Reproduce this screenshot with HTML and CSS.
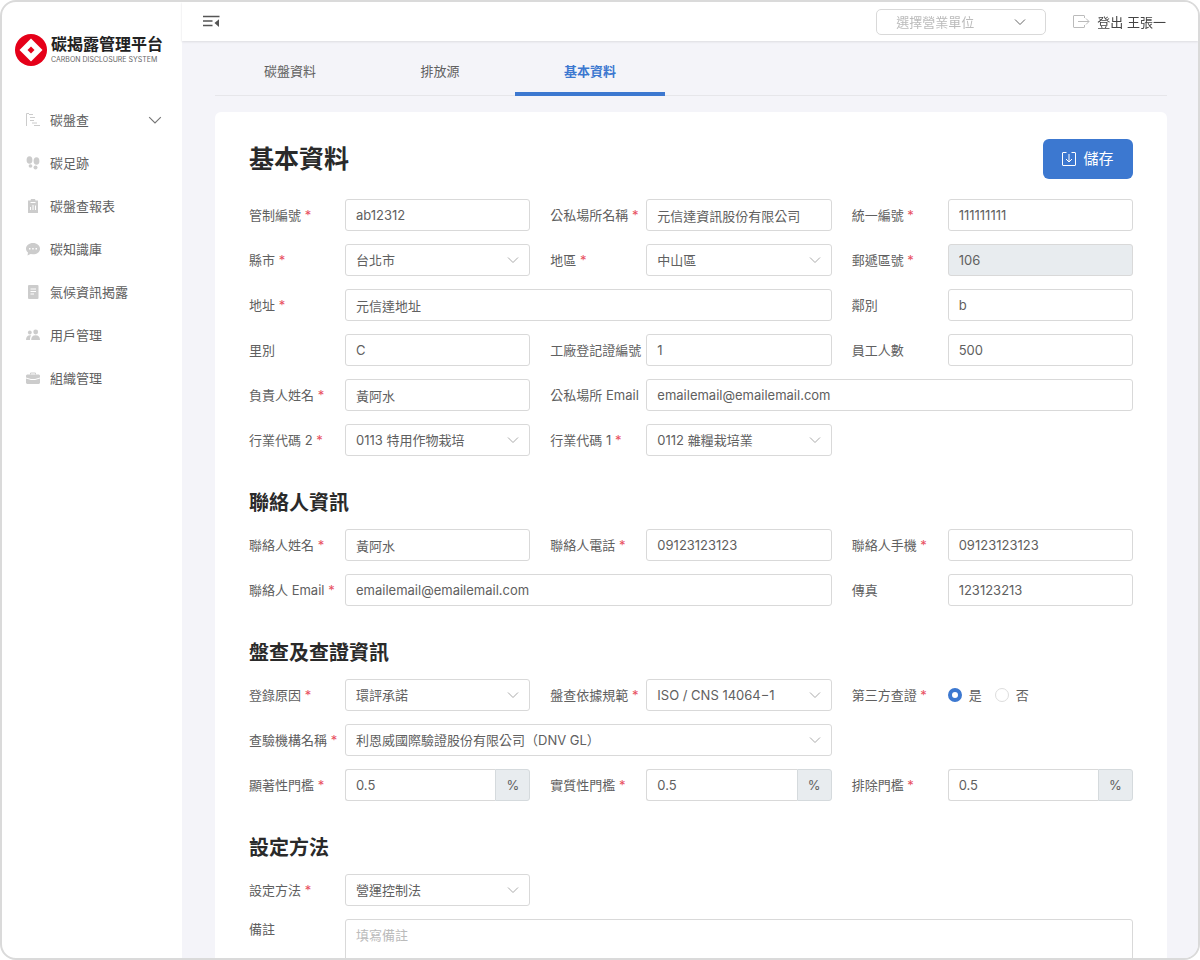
FILE: index.html
```html
<!DOCTYPE html>
<html lang="zh-Hant">
<head>
<meta charset="utf-8">
<meta name="viewport" content="width=device-width, initial-scale=1">
<title>碳揭露管理平台</title>
<link rel="stylesheet" href="styles.css">
</head>
<body>
<svg class="sprite" aria-hidden="true">
  <symbol id="chevron" viewBox="0 0 12 12"><path d="M1 3.5l5 5 5-5" fill="none" stroke="currentColor"/></symbol>
</svg>
<div class="app">
  <aside class="sidebar">
    <a class="brand" href="#">
      <svg class="brand-mark" viewBox="0 0 32 32" aria-hidden="true"><circle cx="16" cy="16" r="16" fill="#e50019"/><path d="M16 4.500L27.500 16 16 27.500 4.500 16z" fill="#fff"/><path d="M16 12.500l3.500 3.500-3.500 3.500-3.500-3.500z" fill="#e50019"/></svg>
      <span class="brand-text"><span class="brand-name">碳揭露管理平台</span><span class="brand-sub">CARBON DISCLOSURE SYSTEM</span></span>
    </a>
    <nav class="menu">
      <a class="menu-item" href="#">
        <svg class="menu-icon" viewBox="0 0 14 14" fill="none" stroke="currentColor"><path d="M3 .5H.5v12.500M3 1.500h4M4 4.500h5M4 7.500h4M6 10h5M8 12.500h6"/></svg>
        <span class="menu-label">碳盤查</span>
        <svg class="menu-arrow"><use href="#chevron"/></svg>
      </a>
      <a class="menu-item" href="#">
        <svg class="menu-icon" viewBox="0 0 14 14" fill="currentColor"><ellipse cx="3.500" cy="4" rx="2.900" ry="3.800"/><ellipse cx="4.500" cy="10" rx="1.900" ry="1.800"/><ellipse cx="10.500" cy="5" rx="2.900" ry="3.800"/><ellipse cx="9.500" cy="11.500" rx="2" ry="2"/></svg>
        <span class="menu-label">碳足跡</span>
      </a>
      <a class="menu-item" href="#">
        <svg class="menu-icon" viewBox="0 0 14 14"><path d="M2 1.500h2.500L5 0h4l.5 1.500H12V14H2z" fill="currentColor"/><path d="M4.500 3.500h5M4.500 11V8M7 11V6M9.500 11V6.500" stroke="#fff" fill="none"/></svg>
        <span class="menu-label">碳盤查報表</span>
      </a>
      <a class="menu-item" href="#">
        <svg class="menu-icon" viewBox="0 0 14 14"><path d="M7 1c4 0 7 2.500 7 5.700s-3 5.600-7 5.600L4.500 12 1.500 13.500l.5-3C.7 9.500 0 8.200 0 6.700 0 3.500 3 1 7 1z" fill="currentColor"/><path d="M3 6h1.500v1.500H3zM6.200 6h1.500v1.500H6.200zM9.500 6H11v1.500H9.500z" fill="#fff"/></svg>
        <span class="menu-label">碳知識庫</span>
      </a>
      <a class="menu-item" href="#">
        <svg class="menu-icon" viewBox="0 0 14 14"><rect x="2" width="10.500" height="14" rx="1" fill="currentColor"/><path d="M4.500 4h5.500M4.500 6.500h5.500M4.500 9h3.500" stroke="#fff" fill="none"/></svg>
        <span class="menu-label">氣候資訊揭露</span>
      </a>
      <a class="menu-item" href="#">
        <svg class="menu-icon" viewBox="0 0 14 14" fill="currentColor"><circle cx="3.800" cy="4.500" r="1.900"/><circle cx="9.700" cy="4" r="2.400"/><path d="M0 12c0-3 1.500-4.700 4-4.700l1.200.3C4.300 8.700 4 10 4 12zM5.200 12c0-3 1.500-4.700 4.400-4.700S14 9 14 12z"/></svg>
        <span class="menu-label">用戶管理</span>
      </a>
      <a class="menu-item" href="#">
        <svg class="menu-icon" viewBox="0 0 14 14"><path d="M4.500 3.500V2h5v1.500" fill="none" stroke="currentColor"/><path d="M1 3.500h12l1 1v2L9 8H5L0 6.500v-2zM0 7.500L5 9h4l5-1.500V12l-1 1H1l-1-1z" fill="currentColor"/></svg>
        <span class="menu-label">組織管理</span>
      </a>
    </nav>
  </aside>
  <div class="page">
    <header class="topbar">
      <button class="collapse" type="button" aria-label="收合選單">
        <svg viewBox="0 0 17 13" aria-hidden="true"><path d="M0 1.500h16.500M0 6h9.500M0 10.500h9.500" stroke="currentColor" stroke-width="1.300" fill="none"/><path d="M11.500 8L16 4.200V12z" fill="currentColor"/></svg>
      </button>
      <div class="topbar-right">
        <span class="select unit">
          <select aria-label="選擇營業單位"><option>選擇營業單位</option></select>
          <svg><use href="#chevron"/></svg>
        </span>
        <a class="logout" href="#">
          <svg viewBox="0 0 17 13" aria-hidden="true" fill="none" stroke="#bbb"><path d="M11.500 3V1a.5.500 0 0 0-.5-.5H1a.5.500 0 0 0-.5.500v11a.5.500 0 0 0 .5.500h10a.5.500 0 0 0 .5-.5v-2M5 6.500h11M13 3.500l3 3-3 3"/></svg>
          <span>登出 王張一</span>
        </a>
      </div>
    </header>
    <main class="main">
      <nav class="tabs">
        <a class="tab" href="#">碳盤資料</a>
        <a class="tab" href="#">排放源</a>
        <a class="tab tab-active" href="#" aria-current="page">基本資料</a>
      </nav>
      <form class="card">
        <div class="card-head">
          <h1>基本資料</h1>
          <button class="save" type="button">
            <svg viewBox="0 0 14 14" aria-hidden="true" fill="none" stroke="currentColor"><path d="M4.500 .5H1a.5.500 0 0 0-.5.500v12a.5.500 0 0 0 .5.500h12a.5.500 0 0 0 .5-.5V1a.5.500 0 0 0-.5-.5H9.500M7 2v8M4 7l3 3 3-3"/></svg>
            儲存
          </button>
        </div>
        <div class="grid">
          <div class="field"><label for="f1">管制編號 <i>*</i></label><input id="f1" type="text" value="ab12312"></div>
          <div class="field"><label for="f2">公私場所名稱 <i>*</i></label><input id="f2" type="text" value="元信達資訊股份有限公司"></div>
          <div class="field"><label for="f3">統一編號 <i>*</i></label><input id="f3" type="text" value="111111111"></div>
          <div class="field"><label for="f4">縣市 <i>*</i></label><span class="select"><select id="f4"><option>台北市</option></select><svg><use href="#chevron"/></svg></span></div>
          <div class="field"><label for="f5">地區 <i>*</i></label><span class="select"><select id="f5"><option>中山區</option></select><svg><use href="#chevron"/></svg></span></div>
          <div class="field"><label for="f6">郵遞區號 <i>*</i></label><input id="f6" type="text" value="106" disabled></div>
          <div class="field span-2"><label for="f7">地址 <i>*</i></label><input id="f7" type="text" value="元信達地址"></div>
          <div class="field"><label for="f8">鄰別</label><input id="f8" type="text" value="b"></div>
          <div class="field"><label for="f9">里別</label><input id="f9" type="text" value="C"></div>
          <div class="field"><label for="f10">工廠登記證編號</label><input id="f10" type="text" value="1"></div>
          <div class="field"><label for="f11">員工人數</label><input id="f11" type="text" value="500"></div>
          <div class="field"><label for="f12">負責人姓名 <i>*</i></label><input id="f12" type="text" value="黃阿水"></div>
          <div class="field span-2"><label for="f13">公私場所 Email</label><input id="f13" type="email" value="emailemail@emailemail.com"></div>
          <div class="field"><label for="f14">行業代碼 2 <i>*</i></label><span class="select"><select id="f14"><option>0113 特用作物栽培</option></select><svg><use href="#chevron"/></svg></span></div>
          <div class="field"><label for="f15">行業代碼 1 <i>*</i></label><span class="select"><select id="f15"><option>0112 雜糧栽培業</option></select><svg><use href="#chevron"/></svg></span></div>
        </div>
        <h2>聯絡人資訊</h2>
        <div class="grid">
          <div class="field"><label for="f16">聯絡人姓名 <i>*</i></label><input id="f16" type="text" value="黃阿水"></div>
          <div class="field"><label for="f17">聯絡人電話 <i>*</i></label><input id="f17" type="tel" value="09123123123"></div>
          <div class="field"><label for="f18">聯絡人手機 <i>*</i></label><input id="f18" type="tel" value="09123123123"></div>
          <div class="field span-2"><label for="f19">聯絡人 Email <i>*</i></label><input id="f19" type="email" value="emailemail@emailemail.com"></div>
          <div class="field"><label for="f20">傳真</label><input id="f20" type="tel" value="123123213"></div>
        </div>
        <h2>盤查及查證資訊</h2>
        <div class="grid">
          <div class="field"><label for="f21">登錄原因 <i>*</i></label><span class="select"><select id="f21"><option>環評承諾</option></select><svg><use href="#chevron"/></svg></span></div>
          <div class="field"><label for="f22">盤查依據規範 <i>*</i></label><span class="select"><select id="f22"><option>ISO / CNS 14064−1</option></select><svg><use href="#chevron"/></svg></span></div>
          <div class="field" role="radiogroup" aria-labelledby="third"><span class="label" id="third">第三方查證 <i>*</i></span>
            <span class="radios"><label><input type="radio" name="third" checked>是</label><label><input type="radio" name="third">否</label></span></div>
          <div class="field span-2"><label for="f24">查驗機構名稱 <i>*</i></label><span class="select"><select id="f24"><option>利恩威國際驗證股份有限公司（DNV GL）</option></select><svg><use href="#chevron"/></svg></span></div>
          <div class="field start"><label for="f25">顯著性門檻 <i>*</i></label><span class="percent"><input id="f25" type="text" value="0.5"><span>%</span></span></div>
          <div class="field"><label for="f26">實質性門檻 <i>*</i></label><span class="percent"><input id="f26" type="text" value="0.5"><span>%</span></span></div>
          <div class="field"><label for="f27">排除門檻 <i>*</i></label><span class="percent"><input id="f27" type="text" value="0.5"><span>%</span></span></div>
        </div>
        <h2>設定方法</h2>
        <div class="grid">
          <div class="field"><label for="f28">設定方法 <i>*</i></label><span class="select"><select id="f28"><option>營運控制法</option></select><svg><use href="#chevron"/></svg></span></div>
          <div class="field note"><label for="f29">備註</label><textarea id="f29" rows="4" placeholder="填寫備註"></textarea></div>
        </div>
      </form>
    </main>
  </div>
</div>
</body>
</html>
```
FILE: styles.css
```css
* { box-sizing: border-box; }
body {
  margin: 0;
  color: #606060;
  font: 13px/20px Inter, "Noto Sans CJK TC", sans-serif;
}
a { color: inherit; text-decoration: none; }
button, input, select, textarea { font: inherit; color: inherit; margin: 0; }
.sprite { display: none; }

.app {
  display: flex;
  height: 100vh;
  overflow: hidden;
  background: #fff;
  border: 2px solid #dadada;
  border-radius: 16px;
}

.sidebar { flex: 0 0 180px; padding-top: 32px; }
.brand { display: flex; align-items: center; gap: 4px; padding-left: 13px; }
.brand-mark { width: 32px; height: 32px; flex: none; }
.brand-text { display: flex; flex-direction: column; white-space: nowrap; }
.brand-name { color: #222; font-size: 16px; line-height: 20px; font-weight: 700; }
.brand-sub { color: #666; font-size: 7px; line-height: 12px; }
.menu { display: flex; flex-direction: column; margin-top: 32px; }
.menu-item { display: flex; align-items: center; gap: 10px; height: 43px; padding: 0 20px 0 24px; }
.menu-icon { width: 14px; height: 14px; color: #ccc; flex: none; }
.menu-label { flex: 1; }
.menu-arrow { width: 14px; height: 14px; color: #777; }

.page { flex: 1; min-width: 0; display: flex; flex-direction: column; }
.topbar {
  display: flex;
  align-items: center;
  justify-content: space-between;
  flex: 0 0 39px;
  padding: 0 32px 0 21px;
  background: #fff;
  box-shadow: 0 1px 2px #dcdce0;
  z-index: 1;
}
.collapse { display: flex; padding: 0; border: 0; background: none; color: #555; cursor: pointer; }
.collapse svg { width: 17px; height: 13px; }
.topbar-right { display: flex; align-items: center; gap: 27px; }
.logout { display: flex; align-items: center; gap: 7px; color: #444; }
.logout svg { width: 17px; height: 13px; }

.main {
  flex: 1;
  min-height: 0;
  overflow: auto;
  scrollbar-width: none;
  padding: 5px 31px 32px 33px;
  background: #f4f4f9;
}
.tabs { display: flex; height: 50px; margin-bottom: 16px; border-bottom: 1px solid #e6e6ea; }
.tab { width: 150px; height: 50px; line-height: 50px; text-align: center; }
.tab-active { color: #3c78d0; font-weight: 700; border-bottom: 4px solid #3c78d0; }

.card { padding: 27px 34px 32px; background: #fff; border-radius: 6px; }
.card-head { display: flex; justify-content: space-between; align-items: center; margin-bottom: 20px; }
h1, h2 { margin: 0; color: #2a2a2a; font-weight: 700; }
h1 { font-size: 25px; line-height: 40px; }
h2 { margin: 32px 0 11px; font-size: 20px; line-height: 30px; }
.save {
  display: flex;
  align-items: center;
  justify-content: center;
  gap: 7px;
  width: 90px;
  height: 40px;
  padding: 0;
  border: 0;
  border-radius: 6px;
  background: #3c78d0;
  color: #fff;
  font-size: 15px;
  cursor: pointer;
}
.save svg { width: 14px; height: 14px; }

.grid { display: grid; grid-template-columns: repeat(3, minmax(0, 1fr)); gap: 13px 20px; }
.field { display: grid; grid-template-columns: 96px minmax(0, 1fr); align-items: center; }
.field > label, .label { white-space: nowrap; }
.field i { color: #e8505f; font-style: normal; }
.span-2 { grid-column: span 2; }
.start { grid-column-start: 1; }
.note { grid-column: 1 / -1; align-items: start; }

input[type="text"], input[type="email"], input[type="tel"], select, textarea {
  width: 100%;
  height: 32px;
  padding: 0 10px;
  border: 1px solid #d9d9d9;
  border-radius: 3px;
  background: #fff;
}
input[type="text"]:disabled { background: #e8ecef; }
textarea { display: block; height: 96px; padding: 5px 10px; resize: none; }
textarea::placeholder { color: #bbb; }

.select { position: relative; display: block; }
.select select { display: block; appearance: none; padding-right: 30px; }
.select svg { position: absolute; right: 11px; top: 10px; width: 12px; height: 12px; color: #aaa; pointer-events: none; }
.unit { width: 170px; }
.unit select { height: 26px; padding-left: 19px; border-radius: 5px; color: #bbb; }
.unit svg { right: 20px; top: 7px; color: #666; }

.percent { display: flex; }
.percent input[type="text"] { flex: 1; min-width: 0; border-radius: 3px 0 0 3px; border-right: 0; }
.percent span {
  flex: 0 0 35px;
  line-height: 30px;
  text-align: center;
  background: #e8ecef;
  border: 1px solid #d5dadd;
  border-radius: 0 3px 3px 0;
}

.radios { display: flex; gap: 13px; }
.radios label { display: flex; align-items: center; gap: 7px; }
.radios input {
  appearance: none;
  width: 14px;
  height: 14px;
  border: 1px solid #ddd;
  border-radius: 50%;
  background: #fff;
}
.radios input:checked { border: 4px solid #3c78d0; }
```
